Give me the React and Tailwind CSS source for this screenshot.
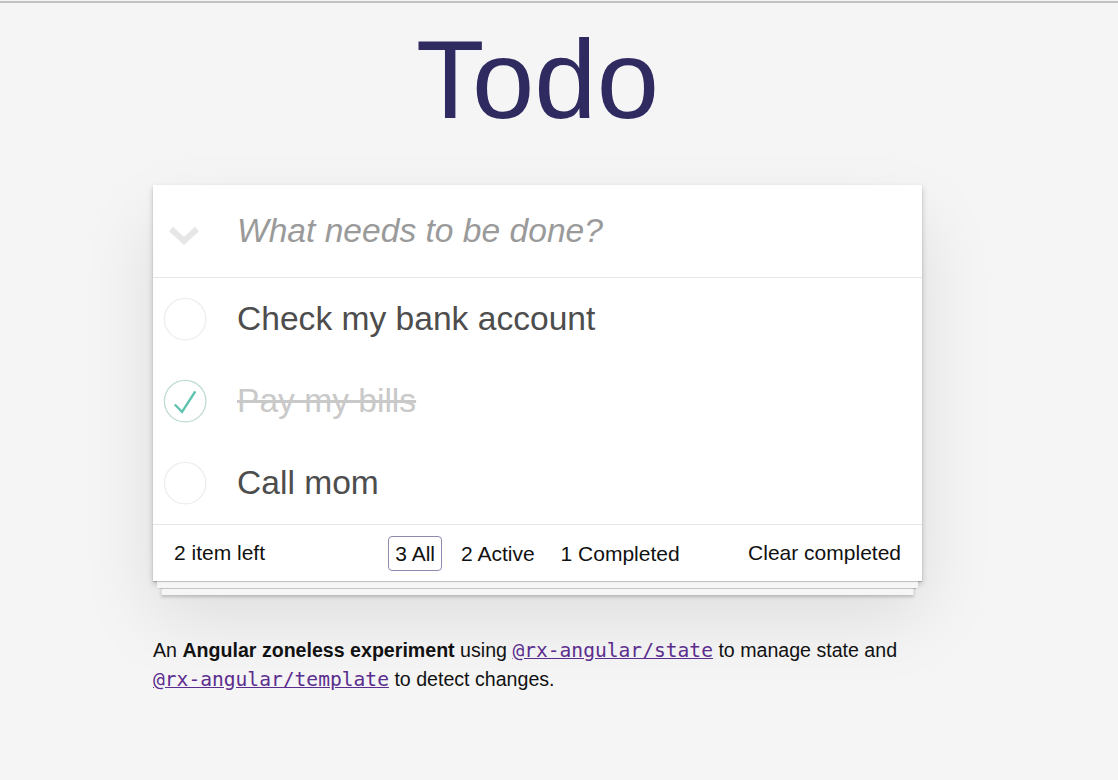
import React from 'react';

const todos = [
  { id: 1, title: 'Check my bank account', done: false },
  { id: 2, title: 'Pay my bills', done: true },
  { id: 3, title: 'Call mom', done: false },
];

const CheckCircle = ({ done }) => (
  <svg width="56" height="56" viewBox="-10 -18 100 135" className="shrink-0">
    <circle cx="50" cy="50" r="50" fill="none" stroke={done ? '#bddad5' : '#ededed'} strokeWidth="3" />
    {done && <path fill="#5dc2af" d="M72 25L42 71 27 56l-4 4 20 20 34-52z" />}
  </svg>
);

const App = () => {
  const left = todos.filter((t) => !t.done).length;

  return (
    <div className="min-h-screen bg-[#f5f5f5] font-['Liberation_Sans',Arial,sans-serif]">
      <div className="h-px" />
      <div className="h-[2px] bg-[#c2c2c2]" />

      <div className="ml-[153px] w-[769px]">
        <h1 className="mt-[21px] h-[112px] text-center text-[112px] leading-none font-normal text-[#2f2a60]">
          Todo
        </h1>

        {/* Card */}
        <div className="mt-[49px] bg-white shadow-[0_1px_1px_rgba(0,0,0,0.2),0_11px_0_-4px_#f6f6f6,0_12.6px_1.4px_-4.2px_rgba(0,0,0,0.2),0_22.4px_0_-8.4px_#f6f6f6,0_24px_3px_-8.4px_rgba(0,0,0,0.2),0_3px_6px_0_rgba(0,0,0,0.2),0_35px_70px_0_rgba(0,0,0,0.1)]">
          <div className="flex h-[93px] items-center border-b border-[#e6e6e6]">
            <div className="flex w-[84px] shrink-0 items-center pt-[8px] pl-[15px]">
              <svg width="32" height="22" viewBox="0 0 32 22">
                <polyline points="3,5 16,17 29,5" fill="none" stroke="#e6e6e6" strokeWidth="6" />
              </svg>
            </div>
            <input
              className="h-full flex-1 bg-transparent pb-[1px] text-[33.6px] text-[#4d4d4d] outline-none placeholder:italic placeholder:text-[#9a9a9a]"
              placeholder="What needs to be done?"
            />
          </div>

          <ul>
            {todos.map((t) => (
              <li key={t.id} className="flex h-[82px] items-center">
                <div className="flex w-[84px] shrink-0 items-center">
                  <CheckCircle done={t.done} />
                </div>
                <span
                  className={`text-[33.6px] ${t.done ? 'text-[#c9c9c9] line-through' : 'text-[#4d4d4d]'}`}
                >
                  {t.title}
                </span>
              </li>
            ))}
          </ul>

          <div className="grid h-[57px] grid-cols-[1fr_auto_1fr] items-center border-t border-[#e6e6e6] px-[21px] text-[21px] text-[#111]">
            <span>{left} item left</span>
            <div className="flex items-center">
              <span className="mx-[6px] rounded-[4px] border border-[#8f8bb0] px-[6px] py-[4px] leading-[25px]">3 All</span>
              <span className="mx-[6px] rounded-[4px] border border-transparent px-[6px] py-[4px] leading-[25px]">2 Active</span>
              <span className="mx-[6px] rounded-[4px] border border-transparent px-[6px] py-[4px] leading-[25px]">1 Completed</span>
            </div>
            <span className="text-right">Clear completed</span>
          </div>
        </div>

        {/* Info */}
        <p className="mt-[55px] text-[19.6px] leading-[28px] text-[#111]">
          An <strong className="font-bold">Angular zoneless experiment</strong> using{' '}
          <a className="text-[#5b2d8e] underline">
            <code className="font-['DejaVu_Sans_Mono',monospace]">@rx-angular/state</code>
          </a>{' '}
          to manage state and{' '}
          <a className="text-[#5b2d8e] underline">
            <code className="font-['DejaVu_Sans_Mono',monospace]">@rx-angular/template</code>
          </a>{' '}
          to detect changes.
        </p>
      </div>
    </div>
  );
};

export default App;
